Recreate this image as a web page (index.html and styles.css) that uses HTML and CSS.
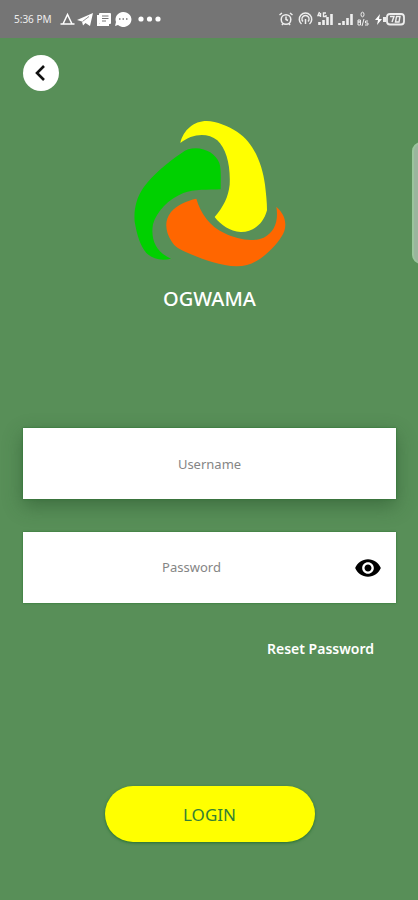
FILE: index.html
```html
<!DOCTYPE html>
<html lang="en">
<head>
<meta charset="utf-8">
<meta name="viewport" content="width=device-width, initial-scale=1">
<title>Ogwama</title>
<link rel="stylesheet" href="styles.css">
</head>
<body>
<header class="status">
  <div class="status-group">
    <span class="clock">5:36 PM</span>
    <svg width="102" height="18" viewBox="0 0 102 18" fill="none" stroke="#fff" aria-hidden="true">
      <path d="M3 14 7.500 4.500 12 14ZM0.500 14h4M10.500 14h4" stroke-width="1.500"/>
      <path d="M17 10 33 3 30 16 25.500 13 23 15.500 22 11.500Z" fill="#fff" stroke="none"/>
      <path d="M22.500 11.500 29 6.500" stroke="#757575" stroke-width="0.800"/>
      <path d="M38 5v10h11" stroke-width="2"/>
      <rect x="39" y="3" width="12" height="11" rx="1" fill="#fff" stroke="none"/>
      <path d="M42 6h6.500M42 8.500h6.500M42 11h4" stroke="#757575"/>
      <path d="M63 2a8 7.500 0 1 1-5 13l-3 1 1-4a8 7.500 0 0 1 7-10Z" fill="#fff" stroke="none"/>
      <path d="M59 9h1.500M62.500 9H64M66 9h1.500" stroke="#757575" stroke-width="1.500"/>
      <g fill="#fff" stroke="none"><circle cx="81" cy="9" r="2.600"/><circle cx="89.500" cy="9" r="2.600"/><circle cx="98" cy="9" r="2.600"/></g>
    </svg>
  </div>
  <svg width="128" height="18" viewBox="0 0 128 18" fill="none" stroke="#eee" stroke-width="1.500" aria-hidden="true">
    <circle cx="8" cy="9.500" r="4.800"/><path d="M8 6.500v3l2 1M1.500 5 4 3M14.500 5 12 3M4 15l1-1.500M12 15l-1-1.500"/>
    <path d="M23.500 14a6.200 6.200 0 1 1 8 0M25 11.500a3.500 3.500 0 1 1 5 0M27.500 9v5"/>
    <path d="M41.500 15v-3M45.500 15v-5M49.500 15V7M53.500 15V4M61.500 15v-2M65.500 15v-4M69.500 15V8M73.500 15V4" stroke-width="2.600"/>
    <path d="M41.500 2 40 5.500h3M42.500 3v4M48 3h-2.500v3.500H48V5" stroke-width="1.400"/>
    <ellipse cx="84.500" cy="4.500" rx="1.500" ry="2.300" stroke-width="1"/>
    <path d="M80 10h2.500v2H80h2.500v3H80ZM86 9l-2 7M90 11h-2.500v2H90v2h-3" stroke-width="1"/>
    <path d="M102 4 97 10h3l-1 5 5-6h-3Z" fill="#fff" stroke="none"/>
    <rect x="109" y="4" width="17" height="10.500" rx="3" stroke-width="1.800"/><path d="M106.500 7v5" stroke-width="3"/>
    <path d="M112 6.500h4L114 12M118.500 6.500h3.500l-1 5.500h-3.500Z" stroke-width="1.400"/>
  </svg>
</header>
<main class="screen">
  <button class="back" type="button" aria-label="Back">
    <svg width="36" height="36" viewBox="0 0 36 36" fill="none" stroke="#111" stroke-width="2.600" aria-hidden="true"><path d="m21 11-7 7 7 7"/></svg>
  </button>
  <div class="brand">
    <svg class="logo" viewBox="0 0 540 510" aria-hidden="true">
      <path fill="#ff0" d="M181 114C190 75 221 48 260 48C290 49 326 64 351 80C403 114 427 180 435 239C438 266 441 290 441 316C430 358 398 382 362 381C330 379 302 360 284 336C310 305 325 276 329 239C332 180 319 133 292 106C261 80 214 87 181 114Z"/>
      <path fill="#00d000" d="M302 253C302 224 304 190 298 174C287 147 260 131 227 130C211 130 198 134 185 144C141 174 98 210 70 248C48 280 41 316 44 350C51 390 60 421 79 444C100 465 127 467 153 461C109 442 91 404 99 358C110 320 144 283 190 264C223 252 263 255 302 253Z"/>
      <path fill="#f60" d="M229 281C201 287 171 299 153 321C131 348 137 382 154 408C164 426 180 434 204 444C250 464 300 482 350 484C385 484 411 470 436 449C464 426 484 401 493 378C502 348 490 324 469 305C476 346 465 381 431 398C397 412 351 403 314 385C270 365 241 324 229 281Z"/>
    </svg>
    <h1 class="name">OGWAMA</h1>
  </div>
  <form class="login">
    <input class="field field-raised" type="text" placeholder="Username" aria-label="Username">
    <div class="password">
      <input class="field" type="password" placeholder="Password" aria-label="Password">
      <button class="reveal" type="button" aria-label="Show password">
        <svg width="28" height="28" viewBox="0 0 24 24" aria-hidden="true"><path d="M12 4.500C7 4.500 2.730 7.610 1 12c1.730 4.390 6 7.500 11 7.500s9.270-3.110 11-7.500c-1.730-4.390-6-7.500-11-7.500zM12 17c-2.760 0-5-2.240-5-5s2.240-5 5-5 5 2.240 5 5-2.240 5-5 5zm0-8c-1.660 0-3 1.340-3 3s1.340 3 3 3 3-1.340 3-3-1.340-3-3-3z"/></svg>
      </button>
    </div>
    <a class="reset" href="#reset">Reset Password</a>
    <button class="submit" type="submit">LOGIN</button>
  </form>
</main>
<div class="edge-handle"></div>
</body>
</html>
```
FILE: styles.css
```css
* { box-sizing: border-box; }
body {
  margin: 0;
  min-height: 100vh;
  background: #588f58;
  color: #fff;
  font-family: "Noto Sans", sans-serif;
  overflow-x: hidden;
}
svg { display: block; }
button { border: 0; padding: 0; font: inherit; cursor: pointer; }
.status {
  height: 38px;
  padding: 0 12px 0 14px;
  display: flex;
  align-items: center;
  justify-content: space-between;
  background: #757575;
}
.status-group { display: flex; align-items: center; gap: 8px; }
.clock { font-size: 10px; color: #eee; white-space: nowrap; }
.screen { padding: 17px 22px 24px 23px; }
.back { display: block; width: 36px; height: 36px; border-radius: 50%; background: #fff; }
.brand {
  display: flex;
  flex-direction: column;
  align-items: center;
  margin-top: 14px;
}
.logo { width: 180px; height: 170px; }
.name { margin: 10px 0 0; font-size: 20px; line-height: 28px; font-weight: 500; }
.login { display: flex; flex-direction: column; margin-top: 115px; }
.field {
  display: block;
  width: 100%;
  height: 71px;
  padding: 0 36px;
  border: 0;
  border-radius: 0;
  background: #fff;
  color: #333;
  font: 13px "Noto Sans", sans-serif;
  text-align: center;
  box-shadow: 0 0 2px #28702e;
}
.field::placeholder { color: #858585; opacity: 1; }
.field-raised { box-shadow: 0 0 2px #28702e, 0 7px 18px rgba(30, 70, 35, 0.45); }
.password { position: relative; margin-top: 33px; }
.password .field { padding: 0 64px 2px 28px; }
.reveal {
  position: absolute;
  right: 14px;
  top: 22px;
  background: none;
}
.reset {
  align-self: flex-end;
  margin: 34px 22px 0 0;
  color: #fff;
  font-size: 14px;
  line-height: 24px;
  font-weight: 600;
  text-decoration: none;
}
.submit {
  align-self: center;
  width: 210px;
  height: 56px;
  margin-top: 125px;
  border-radius: 28px;
  background: #ff0;
  color: #357f35;
  font-size: 17px;
  box-shadow: 0 1px 3px #28702e;
}
.edge-handle {
  position: absolute;
  right: -12px;
  top: 142px;
  width: 18px;
  height: 122px;
  border: 2px solid #9bc49d;
  border-radius: 10px;
  background: #9ab59d;
}
```
